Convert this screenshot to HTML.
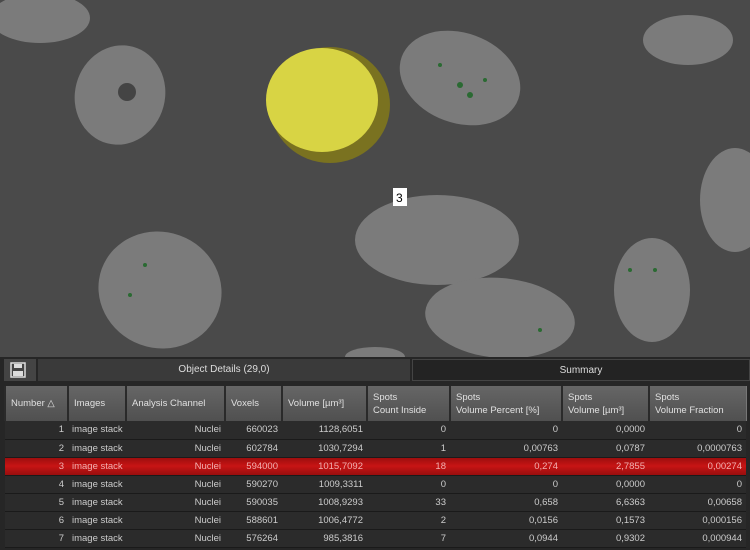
<!DOCTYPE html>
<html><head><style>
*{margin:0;padding:0;box-sizing:border-box}
body{width:750px;height:550px;overflow:hidden;background:#4b4b4b;font-family:"Liberation Sans",sans-serif;position:relative}
#img{position:absolute;left:0;top:0}
#panel{position:absolute;left:0;top:357px;width:750px;height:193px;background:#262626}
.tab{position:absolute;top:2px;height:22px;color:#ddd;font-size:10px;text-align:center;line-height:22px}
table{position:absolute;left:4px;top:29px;width:741px;table-layout:fixed;border-collapse:collapse;font-size:9.5px;color:#ccc;white-space:nowrap}
th{background:linear-gradient(#666,#505050);color:#e0e0e0;font-weight:normal;text-align:left;vertical-align:middle;height:35px;padding:0 5px;border-left:2px solid #2a2a2a;border-right:1px solid #777;line-height:13px;overflow:hidden}
td{height:18px;padding:0 4px;text-align:right;border-bottom:1px solid #1a1a1a;background:#2b2b2b;overflow:hidden;line-height:17px}
td.l{text-align:left}
tr.sel td{background:linear-gradient(#9a0e0e,#c81414 50%,#9a0e0e);color:#f2b0b0}
</style></head><body>
<svg id="img" width="750" height="358">
<rect width="750" height="358" fill="#4a4a4a"/>
<g fill="#7b7b7b">
<ellipse cx="40" cy="18" rx="50" ry="25"/>
<ellipse cx="120" cy="95" rx="45" ry="50" transform="rotate(15 120 95)"/>
<ellipse cx="460" cy="78" rx="62" ry="45" transform="rotate(20 460 78)"/>
<ellipse cx="437" cy="240" rx="82" ry="45"/>
<ellipse cx="160" cy="290" rx="62" ry="58" transform="rotate(20 160 290)"/>
<ellipse cx="500" cy="318" rx="75" ry="40" transform="rotate(5 500 318)"/>
<ellipse cx="652" cy="290" rx="38" ry="52"/>
<ellipse cx="735" cy="200" rx="35" ry="52"/>
<ellipse cx="688" cy="40" rx="45" ry="25"/>
<ellipse cx="375" cy="357" rx="30" ry="10"/>
</g>
<ellipse cx="330" cy="105" rx="60" ry="58" fill="#7a7220"/>
<ellipse cx="322" cy="100" rx="56" ry="52" fill="#d8d444"/>
<circle cx="127" cy="92" r="9" fill="#444"/>
<g fill="#2a6a32">
<circle cx="460" cy="85" r="3"/><circle cx="470" cy="95" r="3"/><circle cx="440" cy="65" r="2"/><circle cx="485" cy="80" r="2"/><circle cx="630" cy="270" r="2"/><circle cx="655" cy="270" r="2"/><circle cx="145" cy="265" r="2"/><circle cx="130" cy="295" r="2"/><circle cx="540" cy="330" r="2"/>
</g>
<rect x="393" y="188" width="14" height="18" fill="#fff"/>
<text x="396" y="202" font-size="12" fill="#000">3</text>
</svg>
<div id="panel">
<div style="position:absolute;left:4px;top:2px;width:32px;height:22px;background:#444"></div>
<svg style="position:absolute;left:10px;top:5px" width="16" height="16"><rect x="1" y="1" width="14" height="14" fill="none" stroke="#ddd" stroke-width="1.5"/><rect x="4" y="2" width="8" height="4" fill="#ddd"/><rect x="3" y="9" width="10" height="5" fill="#ddd"/></svg>
<div class="tab" style="left:38px;width:372px;background:#3a3a3a">Object Details (29,0)</div>
<div class="tab" style="left:412px;width:338px;background:#232323;border:1px solid #444">Summary</div>
<table>
<colgroup><col style="width:63px"><col style="width:58px"><col style="width:99px"><col style="width:57px"><col style="width:85px"><col style="width:83px"><col style="width:112px"><col style="width:87px"><col style="width:97px"></colgroup>
<tr><th>Number △</th><th>Images</th><th>Analysis Channel</th><th>Voxels</th><th>Volume [µm³]</th><th>Spots<br>Count Inside</th><th>Spots<br>Volume Percent [%]</th><th>Spots<br>Volume [µm³]</th><th>Spots<br>Volume Fraction</th></tr>
<tr><td>1</td><td class="l">image stack</td><td>Nuclei</td><td>660023</td><td>1128,6051</td><td>0</td><td>0</td><td>0,0000</td><td>0</td></tr>
<tr><td>2</td><td class="l">image stack</td><td>Nuclei</td><td>602784</td><td>1030,7294</td><td>1</td><td>0,00763</td><td>0,0787</td><td>0,0000763</td></tr>
<tr class="sel"><td>3</td><td class="l">image stack</td><td>Nuclei</td><td>594000</td><td>1015,7092</td><td>18</td><td>0,274</td><td>2,7855</td><td>0,00274</td></tr>
<tr><td>4</td><td class="l">image stack</td><td>Nuclei</td><td>590270</td><td>1009,3311</td><td>0</td><td>0</td><td>0,0000</td><td>0</td></tr>
<tr><td>5</td><td class="l">image stack</td><td>Nuclei</td><td>590035</td><td>1008,9293</td><td>33</td><td>0,658</td><td>6,6363</td><td>0,00658</td></tr>
<tr><td>6</td><td class="l">image stack</td><td>Nuclei</td><td>588601</td><td>1006,4772</td><td>2</td><td>0,0156</td><td>0,1573</td><td>0,000156</td></tr>
<tr><td>7</td><td class="l">image stack</td><td>Nuclei</td><td>576264</td><td>985,3816</td><td>7</td><td>0,0944</td><td>0,9302</td><td>0,000944</td></tr>
</table>
</div>
</body></html>
